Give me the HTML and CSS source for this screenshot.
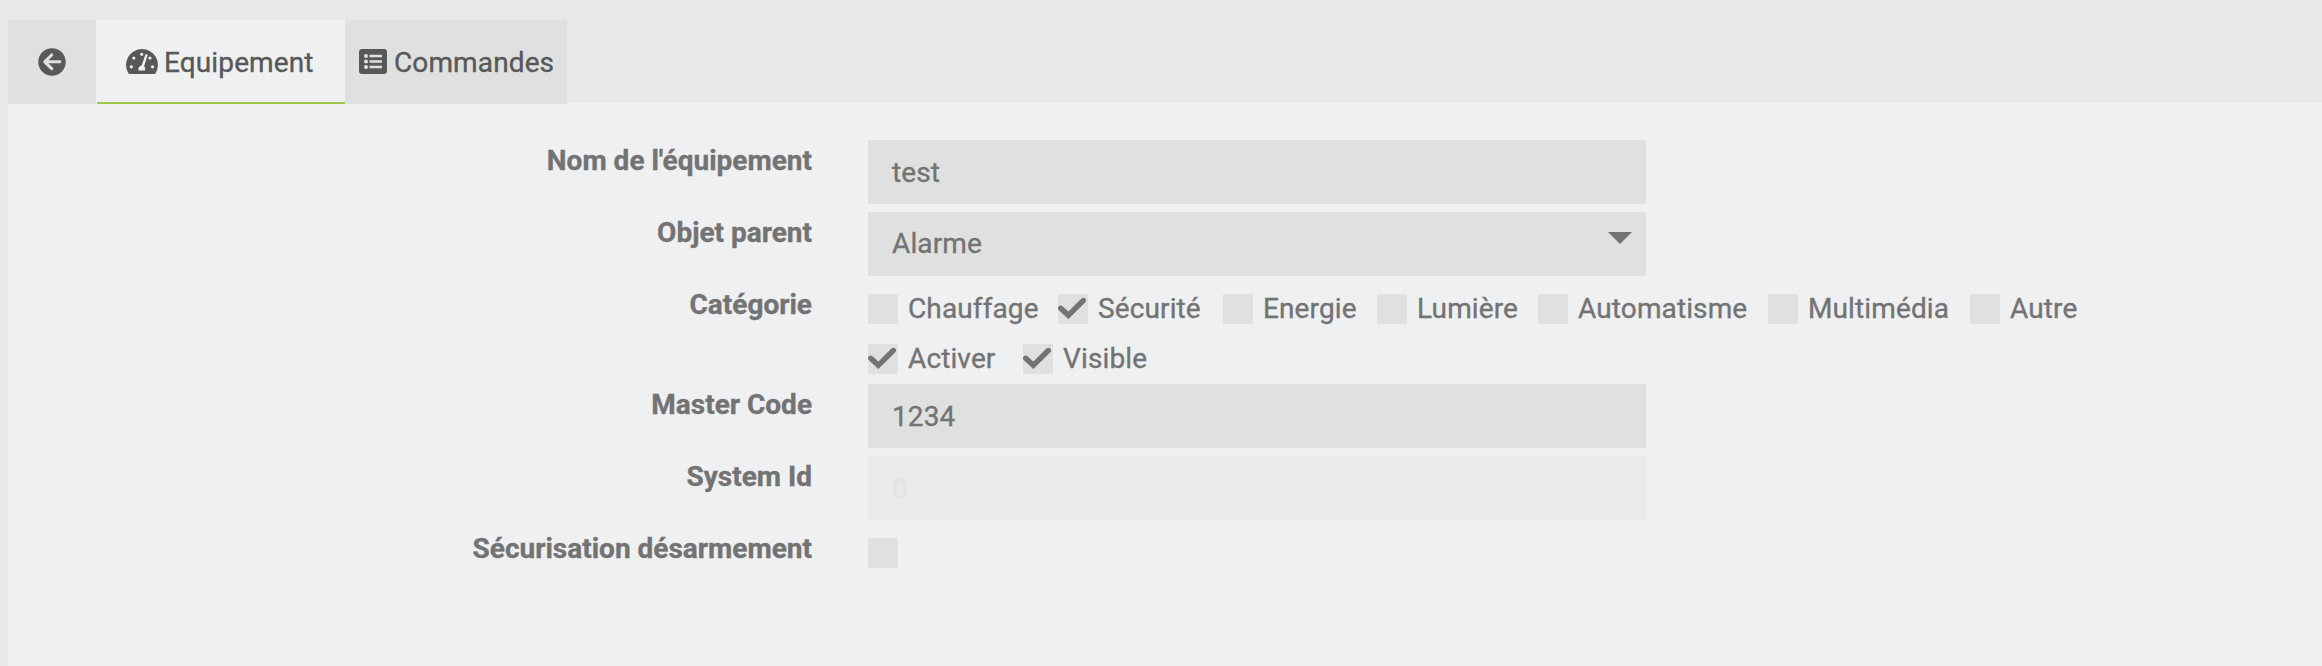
FILE: index.html
```html
<!DOCTYPE html>
<html lang="fr">
<head>
<meta charset="utf-8">
<title>Equipement</title>
<link rel="stylesheet" href="styles.css">
</head>
<body>
<nav class="tabs">
  <a class="tab tab-back"><svg class="icon-back" viewBox="0 0 28 28"><circle cx="14" cy="14" r="13.7" fill="currentColor"/><path d="M13.7 7 6.8 13.8 13.7 20.6M7.5 13.8H21.8" fill="none" stroke="#dfe1e0" stroke-width="3.1" stroke-linecap="round" stroke-linejoin="round"/></svg></a>
  <a class="tab tab-active"><svg class="icon-gauge" viewBox="0 0 32 25"><path d="M16 0A16 16 0 0 0 2.2 24Q2.7 25 3.7 25H28.3Q29.3 25 29.8 24A16 16 0 0 0 16 0Z" fill="currentColor"/><g fill="#eff0f2"><circle cx="15.7" cy="5.3" r="1.6"/><circle cx="7.8" cy="9" r="1.6"/><circle cx="24" cy="9" r="1.6"/><circle cx="5.3" cy="17.8" r="1.6"/><circle cx="26.5" cy="17.8" r="1.6"/><path d="M12.4 21.4Q11.8 17.6 15.8 16.2L19.2 6Q19.7 4.8 20.8 5.2 21.9 5.6 21.5 6.8L18.1 17Q19.8 18.8 19 21.4Z"/></g></svg><span class="tab-text">Equipement</span></a>
  <a class="tab tab-commands"><svg class="icon-list" viewBox="0 0 28 25"><rect width="28" height="25" rx="3" fill="currentColor"/><g fill="#dfe1e0"><circle cx="7" cy="7" r="2"/><circle cx="7" cy="12.5" r="2"/><circle cx="7" cy="18" r="2"/><rect x="10.5" y="5.7" width="12.5" height="2.6" rx=".5"/><rect x="10.5" y="11.2" width="12.5" height="2.6" rx=".5"/><rect x="10.5" y="16.7" width="12.5" height="2.6" rx=".5"/></g></svg><span class="tab-text">Commandes</span></a>
</nav>
<main class="panel">
  <form class="form">
    <div class="row"><div class="label">Nom de l'équipement</div><div class="field">test</div></div>
    <div class="row"><div class="label">Objet parent</div><div class="field select"><span>Alarme</span><svg class="caret" viewBox="0 0 24 12"><path d="M0 0H24L12 12Z" fill="currentColor"/></svg></div></div>
    <div class="row row-category"><div class="label">Catégorie</div>
      <div class="checks">
        <div class="check-line">
          <label class="check w-chauffage"><span class="box"></span>Chauffage</label>
          <label class="check w-securite"><span class="box"><svg class="tick" viewBox="0 0 28 22"><path d="M2.7 11.3 10.3 18.3 25.3 3.5" fill="none" stroke="currentColor" stroke-width="5.4" stroke-linecap="round"/></svg></span>Sécurité</label>
          <label class="check w-energie"><span class="box"></span>Energie</label>
          <label class="check w-lumiere"><span class="box"></span>Lumière</label>
          <label class="check w-automatisme"><span class="box"></span>Automatisme</label>
          <label class="check w-multimedia"><span class="box"></span>Multimédia</label>
          <label class="check"><span class="box"></span>Autre</label>
        </div>
        <div class="check-line">
          <label class="check w-activer"><span class="box"><svg class="tick" viewBox="0 0 28 22"><path d="M2.7 11.3 10.3 18.3 25.3 3.5" fill="none" stroke="currentColor" stroke-width="5.4" stroke-linecap="round"/></svg></span>Activer</label>
          <label class="check"><span class="box"><svg class="tick" viewBox="0 0 28 22"><path d="M2.7 11.3 10.3 18.3 25.3 3.5" fill="none" stroke="currentColor" stroke-width="5.4" stroke-linecap="round"/></svg></span>Visible</label>
        </div>
      </div>
    </div>
    <div class="row"><div class="label">Master Code</div><div class="field">1234</div></div>
    <div class="row"><div class="label">System Id</div><div class="field disabled">0</div></div>
    <div class="row"><div class="label">Sécurisation désarmement</div><span class="box box-alone"></span></div>
  </form>
</main>
</body>
</html>
```
FILE: styles.css
```css
* { box-sizing: border-box; }
body {
  margin: 0;
  height: 666px;
  padding: 20px 0 0 8px;
  display: flex;
  flex-direction: column;
  overflow: hidden;
  background: #e8e8ea;
  color: #737373;
  font: 28px/40px Roboto, sans-serif;
  letter-spacing: .12px;
  -webkit-text-stroke: .35px currentColor;
}
svg { display: block; flex: none; }
.tabs { display: flex; height: 82px; flex: none; color: #585858; }
.tab { display: flex; height: 84px; align-items: center; background: #dfe1e0; flex: none; z-index: 1; white-space: nowrap; }
.tab-back { width: 88px; padding-left: 30px; }
.tab-active { width: 249px; padding-left: 30px; gap: 6px; background: linear-gradient(#9fc54d, #9fc54d) 1px 82px / 248px 2px no-repeat #eff0f2; }
.tab-commands { width: 222px; padding-left: 14px; gap: 7px; }
.tab-text { padding-top: 1px; }
.icon-back { width: 28px; height: 28px; margin-top: -1px; }
.icon-gauge { width: 32px; height: 25px; margin-top: -1px; }
.icon-list { width: 28px; height: 25px; margin-top: -1px; }
.panel { flex: 1; background: #eff0f2; padding-top: 38px; }
.form { display: flex; flex-direction: column; gap: 8px; }
.row { display: grid; grid-template-columns: 804px 778px; column-gap: 56px; height: 64px; }
.row-category { height: 92px; }
.label { padding-top: 1px; font-weight: 700; letter-spacing: 0; text-align: right; white-space: nowrap; }
.field { height: 64px; padding: 13px 24px 0; background: #dfe1e0; }
.select { display: flex; justify-content: space-between; padding: 12px 14px 0 24px; }
.caret { width: 24px; height: 12px; margin-top: 8px; }
.disabled { padding-top: 14px; background: #e9ebea; color: #e2e4e4; }
.checks { display: flex; flex-direction: column; width: 1300px; padding-top: 5px; }
.check-line { display: flex; height: 50px; }
.check { display: flex; gap: 10px; height: 40px; white-space: nowrap; }
.box { width: 30px; height: 30px; margin-top: 5px; padding-top: 3px; background: #dfe1e0; flex: none; }
.box-alone { margin-top: 10px; }
.tick { width: 28px; height: 22px; }
.w-chauffage { width: 190px; }
.w-securite { width: 165px; }
.w-energie { width: 154px; }
.w-lumiere { width: 161px; }
.w-automatisme { width: 230px; }
.w-multimedia { width: 202px; }
.w-activer { width: 155px; }
```
